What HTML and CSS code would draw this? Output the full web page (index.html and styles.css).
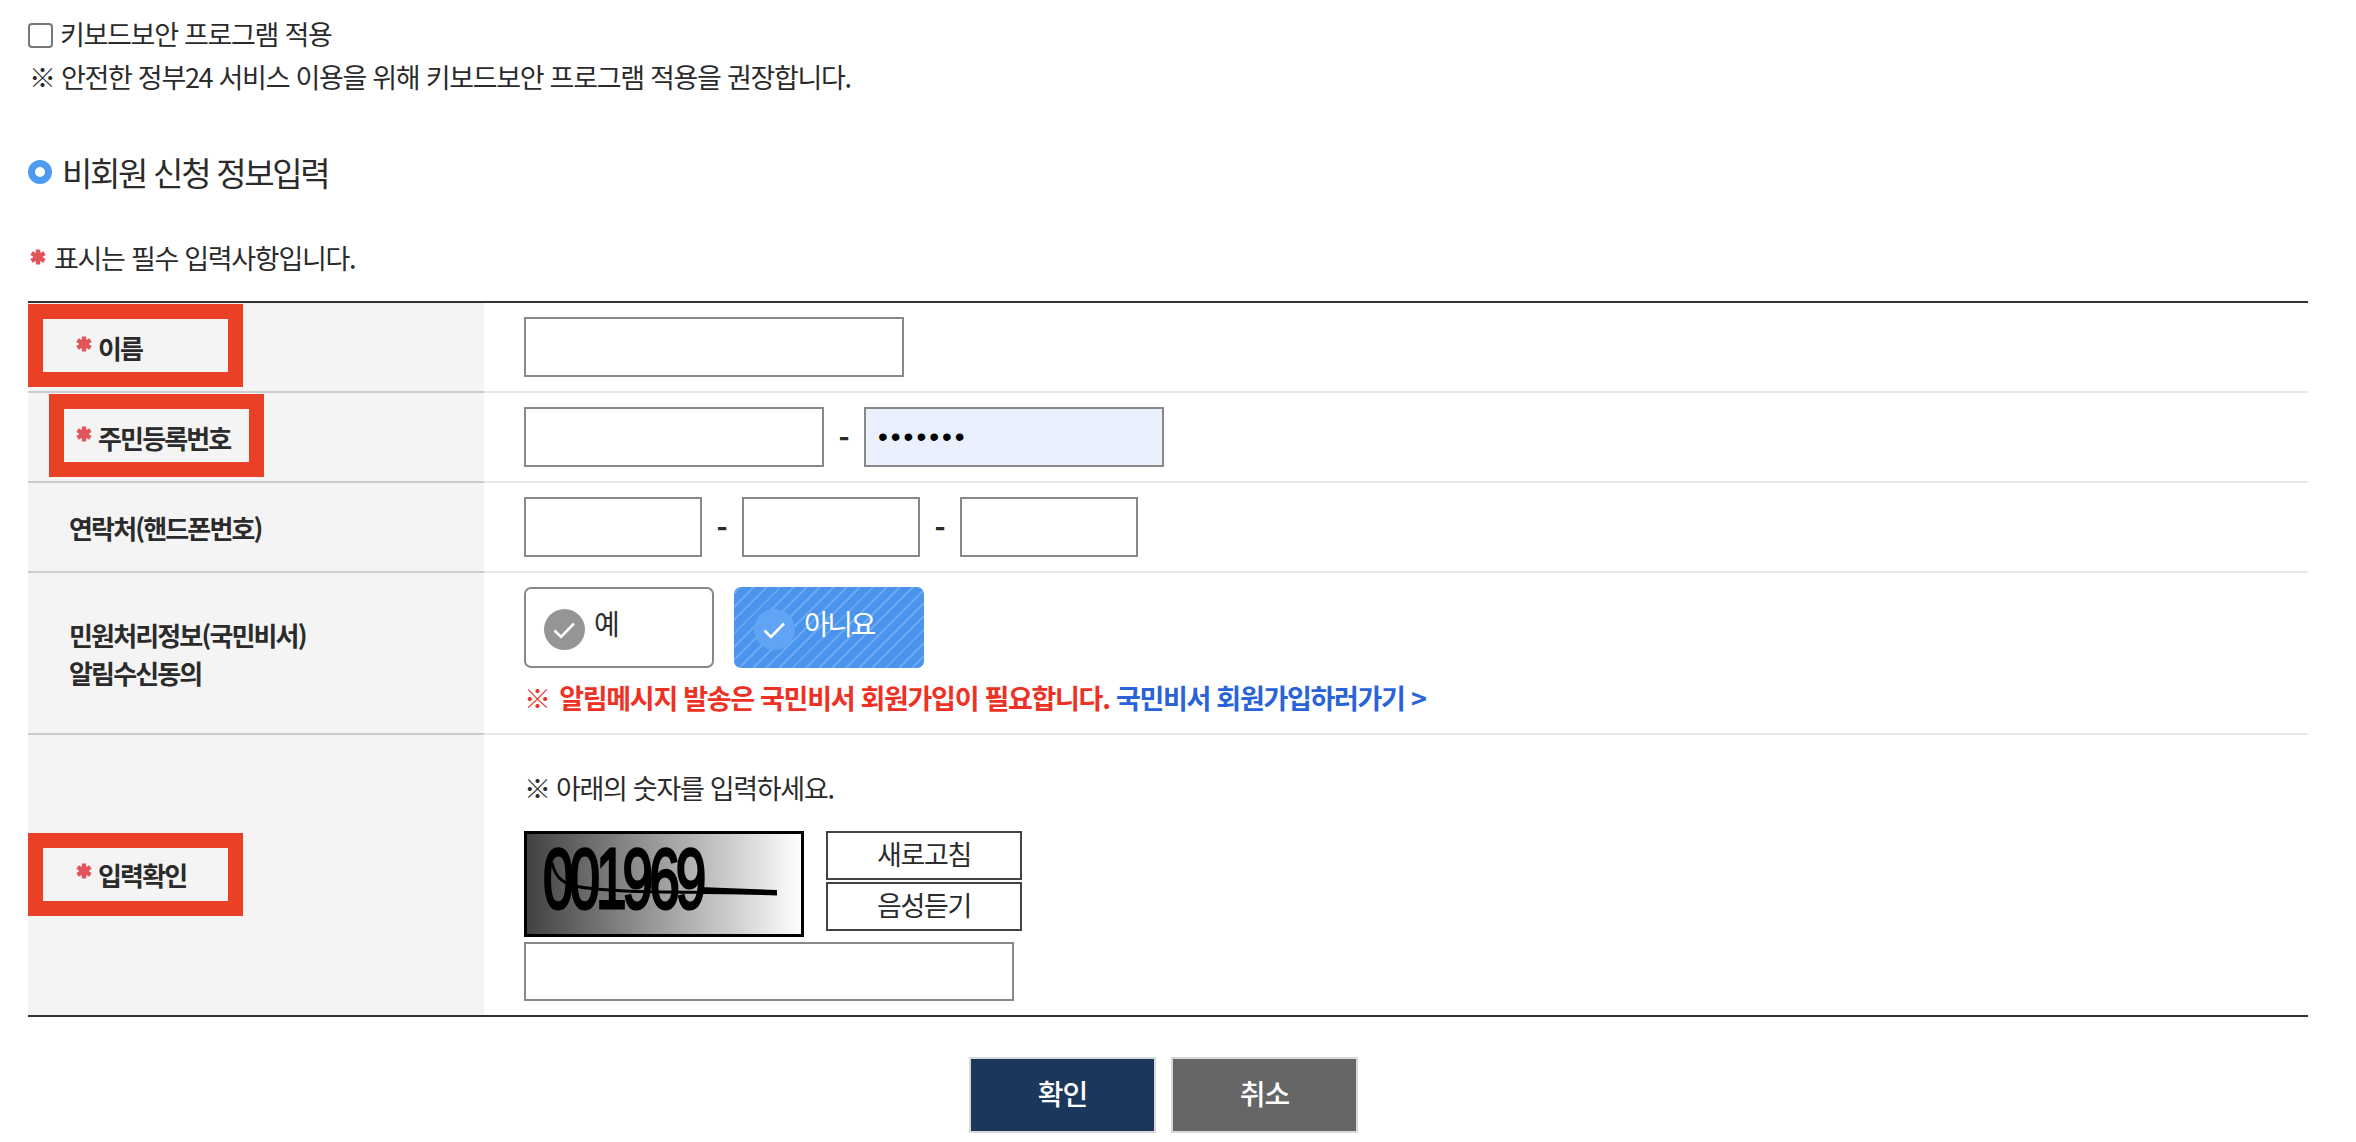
FILE: index.html
```html
<!DOCTYPE html>
<html lang="ko">
<head>
<meta charset="utf-8">
<title>비회원 신청 정보입력</title>
<link rel="stylesheet" href="styles.css">
</head>
<body>
<svg class="defs" width="0" height="0" aria-hidden="true">
  <symbol id="star" viewBox="0 0 16 16">
    <g stroke="#e2555a" stroke-width="4.4" stroke-linecap="butt">
      <line x1="8" y1="0.5" x2="8" y2="15.5"/>
      <line x1="1.5" y1="4.2" x2="14.5" y2="11.8"/>
      <line x1="1.5" y1="11.8" x2="14.5" y2="4.2"/>
    </g>
    <circle cx="8" cy="8" r="5" fill="#e2555a"/>
  </symbol>
  <symbol id="check" viewBox="0 0 41 41">
    <path d="M10.5 21.5l6.5 6.5 13-13.5" fill="none" stroke="#fff" stroke-width="2.6"/>
  </symbol>
</svg>

<div class="top">
  <label class="keyboard"><span class="box"></span><span class="keyboard-text">키보드보안 프로그램 적용</span></label>
  <p class="line">※ 안전한 정부24 서비스 이용을 위해 키보드보안 프로그램 적용을 권장합니다.</p>
</div>

<h2 class="heading"><span class="ring"></span>비회원 신청 정보입력</h2>

<p class="note"><svg class="star"><use href="#star"/></svg>표시는 필수 입력사항입니다.</p>

<div class="form">
  <div class="row">
    <div class="label req"><svg class="star"><use href="#star"/></svg><span>이름</span><i class="mark"></i></div>
    <div class="cell"><input class="inp w380" type="text"></div>
  </div>
  <div class="row">
    <div class="label req"><svg class="star"><use href="#star"/></svg><span>주민등록번호</span><i class="mark mark-shift"></i></div>
    <div class="cell">
      <input class="inp w300" type="text"><span class="dash">-</span><input class="inp w300 filled" type="password" value="1234567">
    </div>
  </div>
  <div class="row">
    <div class="label"><span>연락처(핸드폰번호)</span></div>
    <div class="cell">
      <input class="inp w178" type="text"><span class="dash">-</span><input class="inp w178" type="text"><span class="dash">-</span><input class="inp w178" type="text">
    </div>
  </div>
  <div class="row">
    <div class="label two-line"><span>민원처리정보(국민비서)<br>알림수신동의</span></div>
    <div class="cell stack">
      <div class="choices">
        <div class="choice"><span class="tick"><svg><use href="#check"/></svg></span><span class="choice-text">예</span></div>
        <div class="choice on"><span class="tick"><svg><use href="#check"/></svg></span><span class="choice-text">아니요</span></div>
      </div>
      <p class="warn"><span class="red"><span class="warn-mark">※&nbsp;</span> 알림메시지 발송은 국민비서 회원가입이 필요합니다.</span> <a class="blue">국민비서 회원가입하러가기 &gt;</a></p>
    </div>
  </div>
  <div class="row last">
    <div class="label req"><svg class="star"><use href="#star"/></svg><span>입력확인</span><i class="mark"></i></div>
    <div class="cell stack captcha-cell">
      <p class="hint">※ 아래의 숫자를 입력하세요.</p>
      <div class="captcha-row">
        <svg class="captcha" viewBox="0 0 280 106">
          <defs>
            <linearGradient id="cg" x1="0" x2="1" y1="0" y2="0">
              <stop offset="0" stop-color="#404040"/>
              <stop offset="1" stop-color="#ffffff"/>
            </linearGradient>
          </defs>
          <rect x="1.5" y="1.5" width="277" height="103" fill="url(#cg)" stroke="#000" stroke-width="3"/>
          <text class="captcha-digits" x="0" y="0" transform="translate(19 77) scale(1.34 2.1)">001969</text>
          <path d="M28 32c3 12 8 19 22 23 40 8 120 5 203 8" fill="none" stroke="#000" stroke-width="3"/>
          <path d="M175 56l78 3v5l-78-4z" fill="#000"/>
        </svg>
        <div class="captcha-btns">
          <div class="cbtn">새로고침</div>
          <div class="cbtn">음성듣기</div>
        </div>
      </div>
      <input class="inp w490" type="text">
    </div>
  </div>
</div>

<div class="actions">
  <div class="btn ok">확인</div>
  <div class="btn cancel">취소</div>
</div>
</body>
</html>
```

FILE: styles.css
```css
* { box-sizing: border-box; }
html, body { margin: 0; padding: 0; }
body {
  width: 2356px;
  height: 1142px;
  overflow: hidden;
  padding: 15px 48px 0 28px;
  background: #fff;
  color: #2b2b2b;
  font-family: "Noto Sans CJK KR", "Noto Sans", sans-serif;
  font-size: 27px;
  letter-spacing: -1.3px;
}
.defs { position: absolute; }
p, h2 { margin: 0; font-weight: 400; }

.top { height: 82px; }
.keyboard { display: flex; align-items: center; height: 40px; margin-bottom: 2px; }
.keyboard-text { margin-top: -3px; }
.box {
  width: 25px; height: 25px;
  margin-right: 7px;
  border: 2px solid #777;
  border-radius: 4px;
  background: #fff;
}
.line { height: 40px; line-height: 40px; padding-left: 1px; white-space: nowrap; }

.heading {
  display: flex; align-items: center;
  margin-top: 55px;
  height: 40px;
  font-size: 33px;
  letter-spacing: -2.3px;
}
.ring {
  width: 24px; height: 24px;
  margin-right: 10px;
  border: 7px solid #4d9bf0;
  border-radius: 50%;
  background: #fff;
}

.note {
  display: flex; align-items: center;
  margin-top: 47px;
  height: 36px;
  padding-left: 2px;
}
.star { width: 16px; height: 16px; flex: none; }
.note .star { margin-right: 8px; }

.form {
  margin-top: 26px;
  border-top: 2px solid #333;
  border-bottom: 2px solid #333;
}
.row {
  display: grid;
  grid-template-columns: 456px 1fr;
  border-bottom: 2px solid #e8e8e8;
}
.row.last { border-bottom: 0; }
.label {
  position: relative;
  display: flex; align-items: center;
  margin-bottom: -2px;
  border-bottom: 2px solid #ccc;
  padding-top: 1px;
  padding-left: 41px;
  background: #f4f4f4;
  font-size: 26px;
  font-weight: 700;
  letter-spacing: -1.85px;
  line-height: 40px;
}
.two-line { line-height: 38px; }
.row.last .label { margin-bottom: 0; border-bottom: 0; padding-top: 0; }
.label.req { padding-left: 48px; }
.label.req .star { margin-right: 6px; margin-top: -8px; }
.mark {
  position: absolute;
  left: 0; top: 1px;
  width: 215px; height: 83px;
  border: 15px solid #ea4126;
}
.row.last .mark { top: 98px; }
.mark-shift { left: 21px; }

.cell {
  display: flex; align-items: center;
  padding: 14px 40px;
}
.stack { flex-direction: column; align-items: flex-start; }
.inp {
  display: block;
  height: 60px;
  margin: 0;
  padding: 0 12px;
  border: 2px solid #888;
  border-radius: 0;
  background: #fff;
  outline: 0;
  font-family: "Liberation Sans", sans-serif;
  font-size: 25px;
}
.w380 { width: 380px; }
.w300 { width: 300px; }
.w178 { width: 178px; }
.w490 { width: 490px; height: 59px; }
.filled { background: #e8f0fe; font-size: 28px; letter-spacing: 3px; }
.dash { width: 40px; text-align: center; font-size: 30px; font-weight: 700; letter-spacing: 0; }

.choices { display: flex; gap: 20px; }
.choice {
  display: flex; align-items: center;
  width: 190px; height: 81px;
  padding-left: 18px;
  border: 2px solid #888;
  border-radius: 7px;
  background: #fff;
  font-size: 28px;
  letter-spacing: -2.5px;
}
.choice.on {
  border: 0;
  padding-left: 20px;
  color: #fff;
  background: repeating-linear-gradient(-45deg, #4a94ee 0 7.4px, #6aa9f2 7.4px 9.4px);
}
.tick {
  width: 41px; height: 41px;
  margin: 3px 9px 0 0;
  border-radius: 50%;
  background: #959595;
}
.on .tick { background: #60a5f5; }
.tick svg { display: block; width: 41px; height: 41px; }
.choice-text { margin-top: -9px; }

.warn { margin: 10px 0 1px; font-weight: 700; line-height: 40px; white-space: nowrap; letter-spacing: -1.3px; }
.warn-mark { margin-right: -3px; }
.red { color: #ee3124; }
.blue { color: #2a63d8; }

.captcha-cell { padding-top: 0; }
.hint { margin-top: 33px; height: 40px; line-height: 40px; padding-left: 0; }
.captcha-row { display: flex; gap: 22px; margin-top: 23px; }
.captcha { display: block; width: 280px; height: 106px; }
.captcha-digits {
  font-family: "Liberation Sans", sans-serif;
  font-weight: 400;
  font-size: 41px;
  letter-spacing: -3px;
  stroke: #000;
  stroke-width: 1.5px;
}
.captcha-btns { display: flex; flex-direction: column; gap: 2px; }
.cbtn {
  width: 196px; height: 49px;
  border: 2px solid #444;
  background: #fff;
  text-align: center;
  line-height: 42px;
}
.captcha-row + .inp { margin-top: 5px; }

.actions {
  display: flex; justify-content: center; gap: 15px;
  margin-top: 40px;
  padding-right: 9px;
}
.btn {
  width: 187px; height: 76px;
  border: 2px solid #d8d8d8;
  color: #fff;
  text-align: center;
  line-height: 68px;
  font-size: 28px;
  font-weight: 500;
  letter-spacing: -1px;
}
.ok { background: #1b375c; }
.cancel { background: #666; }
```
